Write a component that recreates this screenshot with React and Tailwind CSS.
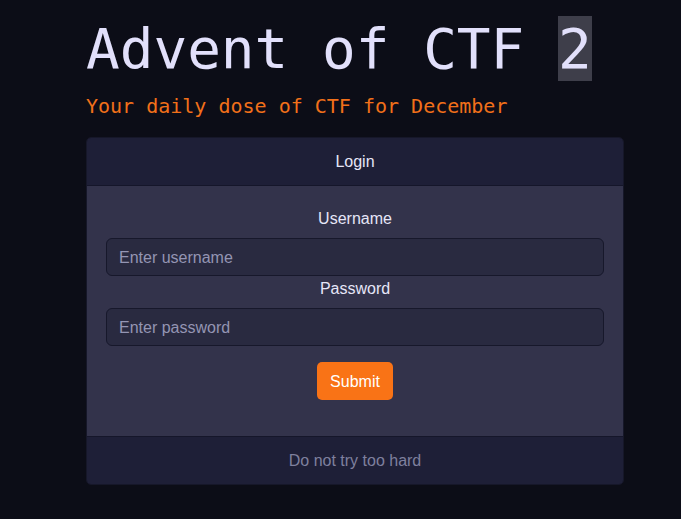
import React from 'react';

const App = () => {
  return (
    <div className="min-h-[519px] bg-[#0c0d17] pl-[86px] pt-[16px]" style={{ fontFamily: '"Liberation Sans", Arial, sans-serif' }}>
      <div className="w-[538px]">
        <h1 className="text-[56px] leading-[66px] text-[#e2e0fb] font-normal" style={{ fontFamily: '"DejaVu Sans Mono", monospace' }}>
          Advent of CTF <span className="bg-[#3e3e4a]">2</span>
        </h1>
        <p className="pt-px text-[20px] leading-[46px] text-[#f2701a]" style={{ fontFamily: '"DejaVu Sans Mono", monospace' }}>
          Your daily dose of CTF for December
        </p>

        <div className="mt-[8px] rounded-[5px] border border-[#161729] overflow-hidden">
          <div className="h-[48px] flex items-center justify-center bg-[#1e1f37] border-b border-[#15162a] text-[16px] text-[#e6e6f8]">
            Login
          </div>

          <div className="bg-[#33334b] px-[19px] pt-[21px] pb-[36px]">
            <div className="text-center text-[16px] leading-[24px] text-[#e6e6f8]">Username</div>
            <input
              type="text"
              placeholder="Enter username"
              className="mt-[7px] block w-full h-[38px] rounded-[6px] border border-[#17182b] bg-[#292a40] px-3 pt-px text-[16px] text-[#e6e6f8] placeholder:text-[#9495b3] outline-none"
            />
            <div className="pt-px text-center text-[16px] leading-[24px] text-[#e6e6f8]">Password</div>
            <input
              type="password"
              placeholder="Enter password"
              className="mt-[7px] block w-full h-[38px] rounded-[6px] border border-[#17182b] bg-[#292a40] px-3 pt-px text-[16px] text-[#e6e6f8] placeholder:text-[#9495b3] outline-none"
            />
            <div className="mt-4 flex justify-center">
              <button className="h-[38px] px-[13px] pt-px rounded-[5px] bg-[#f97316] text-white text-[16px]">
                Submit
              </button>
            </div>
          </div>

          <div className="h-[48px] pt-px flex items-center justify-center bg-[#1e1f37] border-t border-[#15162a] text-[16px] text-[#7f809e]">
            Do not try too hard
          </div>
        </div>
      </div>
    </div>
  );
};

export default App;
